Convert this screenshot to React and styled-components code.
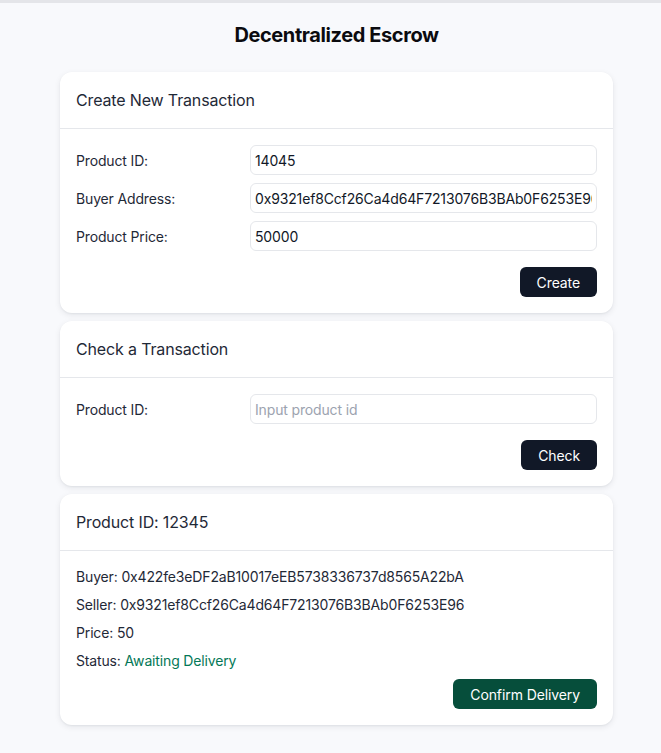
import React, { useState } from 'react'
import styled, { createGlobalStyle } from 'styled-components'

const GlobalStyle = createGlobalStyle`
  body {
    margin: 0;
    background: #f8f9fc;
    font-family: Inter, 'Liberation Sans', sans-serif;
    letter-spacing: -0.15px;
    color: #1f2937;
  }
  * { box-sizing: border-box; }
`

const Field = ({ label, value, placeholder }) => {
  const [text, setText] = useState(value || '')
  return (
    <FieldRow>
      <Label>{label}</Label>
      <Input value={text} placeholder={placeholder} onChange={e => setText(e.target.value)} />
    </FieldRow>
  )
}

const App = () => {
  return (
    <>
      <GlobalStyle />
      <TopBar />
      <Page>
        <Title>Decentralized Escrow</Title>
        <Card>
          <CardHeader>Create New Transaction</CardHeader>
          <CardBody>
            <Field label='Product ID:' value='14045' />
            <Field label='Buyer Address:' value='0x9321ef8Ccf26Ca4d64F7213076B3BAb0F6253E96' />
            <Field label='Product Price:' value='50000' />
            <Actions spaced>
              <Button>Create</Button>
            </Actions>
          </CardBody>
        </Card>
        <Card>
          <CardHeader>Check a Transaction</CardHeader>
          <CardBody>
            <Field label='Product ID:' placeholder='Input product id' />
            <Actions spaced>
              <Button>Check</Button>
            </Actions>
          </CardBody>
        </Card>
        <Card>
          <CardHeader>Product ID: 12345</CardHeader>
          <CardBody>
            <InfoLine>Buyer: 0x422fe3eDF2aB10017eEB5738336737d8565A22bA</InfoLine>
            <InfoLine>Seller: 0x9321ef8Ccf26Ca4d64F7213076B3BAb0F6253E96</InfoLine>
            <InfoLine>Price: 50</InfoLine>
            <InfoLine>
              Status: <Status>Awaiting Delivery</Status>
            </InfoLine>
            <Actions>
              <Button variant='success'>Confirm Delivery</Button>
            </Actions>
          </CardBody>
        </Card>
      </Page>
    </>
  )
}

export default App

const TopBar = styled.div`
  height: 3px;
  background: #e4e5e9;
`
const Page = styled.div`
  width: 553px;
  margin-left: 60px;
  padding-bottom: 24px;
  display: flex;
  flex-direction: column;
  gap: 8px;
`
const Title = styled.h1`
  margin: 0 0 15px;
  padding-top: 18px;
  font-size: 20px;
  line-height: 28px;
  font-weight: 700;
  letter-spacing: -0.4px;
  color: #0b0b0f;
  text-align: center;
`
const Card = styled.section`
  background: #fff;
  border-radius: 12px;
  box-shadow: 0 2px 6px rgba(15, 23, 42, 0.08), 0 1px 2px rgba(15, 23, 42, 0.05);
`
const CardHeader = styled.div`
  padding: 16px;
  font-size: 16px;
  line-height: 24px;
  color: #1f2937;
  border-bottom: 1px solid #e5e7eb;
`
const CardBody = styled.div`
  padding: 16px;
  display: flex;
  flex-direction: column;
  gap: 8px;
`
const FieldRow = styled.div`
  display: grid;
  grid-template-columns: 174px 1fr;
  align-items: center;
`
const Label = styled.label`
  font-size: 14px;
  color: #1f2937;
`
const Input = styled.input`
  height: 30px;
  width: 100%;
  padding: 0 4px;
  border: 1px solid #e5e7eb;
  border-radius: 6px;
  font-family: inherit;
  font-size: 14px;
  letter-spacing: -0.15px;
  color: #111827;
  outline: none;
  &::placeholder {
    color: #9ca3af;
  }
`
const Actions = styled.div`
  display: flex;
  justify-content: flex-end;
  margin-top: ${p => (p.spaced ? '8px' : '0')};
`
const Button = styled.button`
  height: 30px;
  padding: 0 17px;
  border: none;
  border-radius: 6px;
  background: ${p => (p.variant === 'success' ? '#064e3b' : '#111827')};
  color: #fff;
  font-family: inherit;
  font-size: 14px;
  font-weight: 400;
  letter-spacing: -0.1px;
  cursor: pointer;
`
const InfoLine = styled.div`
  font-size: 14px;
  line-height: 20px;
  color: #1f2937;
`
const Status = styled.span`
  color: #047857;
`
